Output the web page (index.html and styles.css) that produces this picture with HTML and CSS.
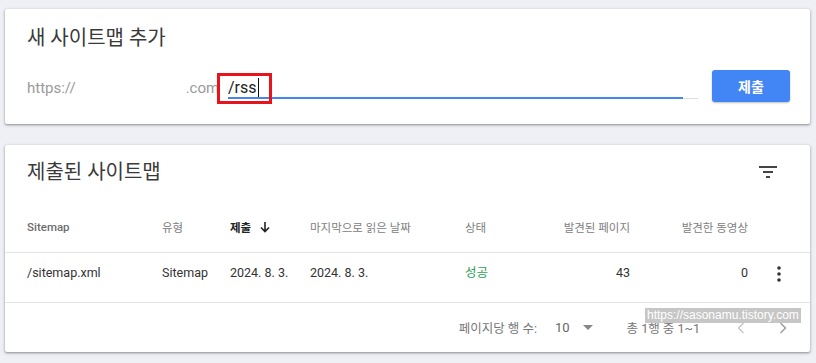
FILE: index.html
```html
<!DOCTYPE html>
<html lang="ko">
<head>
<meta charset="utf-8">
<link rel="stylesheet" href="styles.css">
</head>
<body>
<section class="card add-card">
  <h2 class="card-title">새 사이트맵 추가</h2>
  <div class="add-row">
    <div class="prefix"><span>https://</span><span class="redact"></span><span>.com</span></div>
    <div class="field">
      <span class="field-text">/rss<span class="caret"></span></span>
      <span class="mark"></span>
    </div>
    <button class="submit">제출</button>
  </div>
</section>

<section class="card list-card">
  <div class="list-head">
    <h2 class="card-title">제출된 사이트맵</h2>
    <svg class="filter" width="18" height="12" viewBox="0 0 18 12"><rect x="0" y="0" width="18" height="2" fill="#444"/><rect x="4" y="5" width="10" height="2" fill="#444"/><rect x="7" y="10" width="4" height="2" fill="#444"/></svg>
  </div>
  <div class="table">
    <div class="row thead">
      <div class="c c-en">Sitemap</div>
      <div class="c">유형</div>
      <div class="c sorted">제출 <svg width="12" height="12" viewBox="0 0 12 12"><path d="M6 1v9M2 6.5l4 4 4-4" fill="none" stroke="#222" stroke-width="1.6"/></svg></div>
      <div class="c">마지막으로 읽은 날짜</div>
      <div class="c">상태</div>
      <div class="c num">발견된 페이지</div>
      <div class="c num">발견한 동영상</div>
      <div class="c"></div>
    </div>
    <div class="row tbody">
      <div class="c">/sitemap.xml</div>
      <div class="c">Sitemap</div>
      <div class="c">2024. 8. 3.</div>
      <div class="c">2024. 8. 3.</div>
      <div class="c ok">성공</div>
      <div class="c num">43</div>
      <div class="c num">0</div>
      <div class="c kebab"><svg width="4" height="16" viewBox="0 0 4 16"><circle cx="2" cy="2" r="1.8" fill="#333"/><circle cx="2" cy="8" r="1.8" fill="#333"/><circle cx="2" cy="14" r="1.8" fill="#333"/></svg></div>
    </div>
  </div>
  <div class="pager">
    <span class="rpp">페이지당 행 수:</span>
    <span class="rpp-val">10</span>
    <svg class="dd" width="10" height="5" viewBox="0 0 10 5"><path d="M0 0h10L5 5z" fill="#888"/></svg>
    <span class="range">총 1행 중 1~1</span>
    <svg class="nav prev" width="8" height="12" viewBox="0 0 8 12"><path d="M6.5 1L1.5 6l5 5" fill="none" stroke="#c4c4c4" stroke-width="1.4"/></svg>
    <svg class="nav next" width="8" height="12" viewBox="0 0 8 12"><path d="M1.5 1l5 5-5 5" fill="none" stroke="#9a9a9a" stroke-width="1.4"/></svg>
    <span class="watermark">https://sasonamu.tistory.com</span>
  </div>
</section>
</body>
</html>
```
FILE: styles.css
```css
* { box-sizing: border-box; }
html, body { margin: 0; }
body {
  background: #eef0f5;
  padding: 9px 6px 0 5px;
  font-family: Roboto, "Noto Sans CJK KR", sans-serif;
  color: #333;
  width: 816px;
  height: 363px;
  overflow: hidden;
}
.card {
  background: #fff;
  border-radius: 2px;
  box-shadow: 0 1px 2px rgba(0,0,0,.28), 0 1px 3px 1px rgba(0,0,0,.12);
}
.card-title {
  margin: 0;
  font-weight: 400;
  font-size: 20px;
  line-height: 24px;
  color: #3a3a3a;
}
.add-card {
  height: 115px;
  padding: 17px 20px 0 22px;
}
.add-row {
  display: flex;
  align-items: flex-start;
  margin-top: 20px;
}
.prefix {
  display: flex;
  font-size: 15px;
  color: #9a9a9a;
  padding-top: 8px;
  line-height: 20px;
  width: 201px;
}
.redact { width: 110px; }
.field {
  position: relative;
  width: 470px;
  height: 29px;
  border-bottom: 1px solid #ddd;
  padding-top: 8px;
}
.field::after {
  content: "";
  position: absolute;
  left: 0;
  bottom: -1px;
  width: 455px;
  height: 2px;
  background: #4285f4;
}
.field-text {
  font-size: 16px;
  line-height: 20px;
  color: #222;
}
.caret {
  display: inline-block;
  width: 1px;
  height: 19px;
  background: #111;
  vertical-align: -4px;
  margin-left: 1px;
}
.mark {
  position: absolute;
  left: -11px;
  top: 3px;
  width: 55px;
  height: 31px;
  border: 3px solid #e8141c;
  z-index: 1;
}
.submit {
  margin-left: 14px;
  margin-top: 0;
  width: 78px;
  height: 32px;
  border: none;
  border-radius: 3px;
  background: #4285f4;
  color: #fff;
  font-family: Roboto, "Noto Sans CJK KR", sans-serif;
  font-size: 14px;
  font-weight: 700;
  box-shadow: 0 1px 2px rgba(0,0,0,.25);
}
.list-card {
  margin-top: 21px;
  height: 207px;
}
.list-head {
  display: flex;
  justify-content: space-between;
  align-items: center;
  padding: 15px 33px 16px 22px;
}
.row {
  display: grid;
  grid-template-columns: 135px 68px 80px 155px 93px 72px 118px 62px;
  padding-left: 22px;
  border-bottom: 1px solid #e3e3e3;
}
.thead {
  height: 53px;
  align-items: center;
  font-size: 11.5px;
  color: #808080;
  padding-top: 2px;
}
.c-en { font-weight: 500; color: #6d6d6d; }
.sorted {
  color: #222;
  font-weight: 700;
  display: flex;
  align-items: center;
  gap: 8px;
}
.num { text-align: right; }
.tbody {
  height: 50px;
  font-size: 12.5px;
  color: #333;
  padding-top: 11px;
  line-height: 18px;
}
.ok { color: #2f9e5a; }
.kebab { display: flex; justify-content: center; padding-top: 2px; }
.pager {
  position: relative;
  display: flex;
  align-items: center;
  justify-content: flex-end;
  height: 49px;
  padding-right: 23px;
  font-size: 12.5px;
  color: #777;
}
.rpp { margin-right: 18px; }
.rpp-val { color: #666; margin-right: 13px; font-size: 13px; }
.dd { margin-right: 34px; }
.range { margin-right: 37px; }
.prev { margin-right: 34px; }
.watermark {
  position: absolute;
  left: 640px;
  top: 5px;
  padding: 0 2px;
  background: #c6c6c6;
  color: #fff;
  font-size: 12px;
  line-height: 15px;
  font-family: "Liberation Sans", sans-serif;
}
```
